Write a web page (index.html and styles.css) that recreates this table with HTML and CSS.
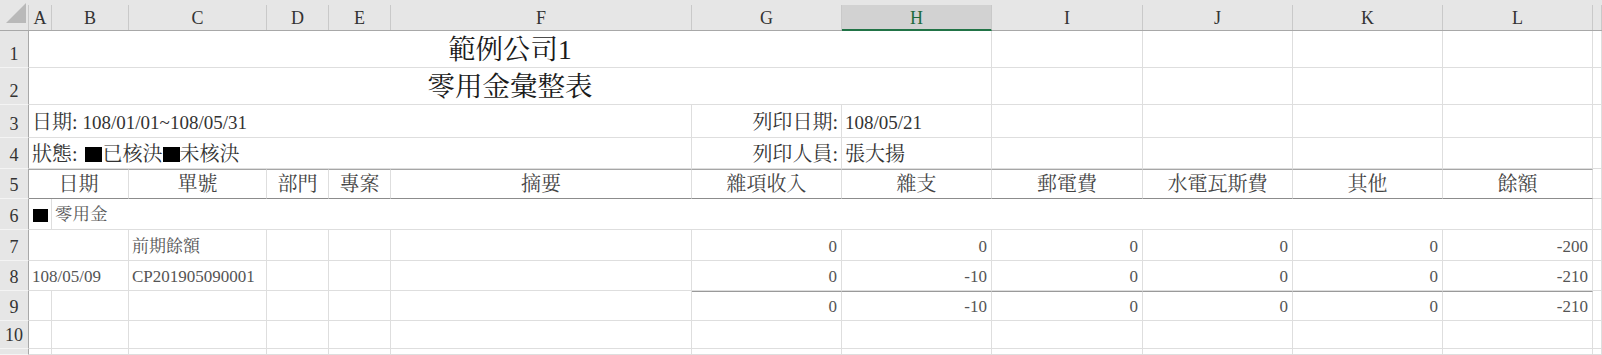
FILE: index.html
```html
<!DOCTYPE html>
<html lang="zh-Hant">
<head>
<meta charset="utf-8">
<title>零用金彙整表</title>
<link rel="stylesheet" href="styles.css">
</head>
<body>
<div class="sheet">
  <div class="r hdr">
    <div class="corner"><svg width="28" height="26" viewBox="0 0 28 26"><polygon points="26,3 26,23 6,23" fill="#b9b9b9"/></svg></div>
    <div class="ch">A</div><div class="ch">B</div><div class="ch">C</div><div class="ch">D</div><div class="ch">E</div><div class="ch">F</div><div class="ch">G</div><div class="ch sel">H</div><div class="ch">I</div><div class="ch">J</div><div class="ch">K</div><div class="ch">L</div><div class="ch"></div>
  </div>

  <div class="r r1">
    <div class="rh">1</div>
    <div class="c s8 center title">範例公司1</div>
    <div class="c"></div><div class="c"></div><div class="c"></div><div class="c"></div><div class="c"></div>
  </div>
  <div class="r r2">
    <div class="rh">2</div>
    <div class="c s8 center title">零用金彙整表</div>
    <div class="c"></div><div class="c"></div><div class="c"></div><div class="c"></div><div class="c"></div>
  </div>
  <div class="r r3">
    <div class="rh">3</div>
    <div class="c s6 info"><span>日期: <span class="lat">108/01/01~108/05/31</span></span></div>
    <div class="c info right">列印日期:</div>
    <div class="c info"><span class="lat">108/05/21</span></div>
    <div class="c"></div><div class="c"></div><div class="c"></div><div class="c"></div><div class="c"></div>
  </div>
  <div class="r r4">
    <div class="rh">4</div>
    <div class="c s6 info"><span>狀態:<span class="sq first"></span>已核決<span class="sq"></span>未核決</span></div>
    <div class="c info right">列印人員:</div>
    <div class="c info">張大揚</div>
    <div class="c"></div><div class="c"></div><div class="c"></div><div class="c"></div><div class="c"></div>
  </div>
  <div class="r r5">
    <div class="rh">5</div>
    <div class="c th s2 center">日期</div>
    <div class="c th center">單號</div>
    <div class="c th center">部門</div>
    <div class="c th center">專案</div>
    <div class="c th center">摘要</div>
    <div class="c th center">雜項收入</div>
    <div class="c th center">雜支</div>
    <div class="c th center">郵電費</div>
    <div class="c th center">水電瓦斯費</div>
    <div class="c th center">其他</div>
    <div class="c th center">餘額</div>
    <div class="c"></div>
  </div>
  <div class="r r6">
    <div class="rh">6</div>
    <div class="c grp"><span class="sq small"></span></div>
    <div class="c s11 grp">零用金</div>
    <div class="c"></div>
  </div>
  <div class="r r7">
    <div class="rh">7</div>
    <div class="c s2 d"></div>
    <div class="c d">前期餘額</div>
    <div class="c d"></div><div class="c d"></div><div class="c d"></div>
    <div class="c d num">0</div><div class="c d num">0</div><div class="c d num">0</div><div class="c d num">0</div><div class="c d num">0</div><div class="c d num">-200</div>
    <div class="c"></div>
  </div>
  <div class="r r8">
    <div class="rh">8</div>
    <div class="c s2 d">108/05/09</div>
    <div class="c d">CP201905090001</div>
    <div class="c d"></div><div class="c d"></div><div class="c d"></div>
    <div class="c d num">0</div><div class="c d num">-10</div><div class="c d num">0</div><div class="c d num">0</div><div class="c d num">0</div><div class="c d num">-210</div>
    <div class="c"></div>
  </div>
  <div class="r r9">
    <div class="rh">9</div>
    <div class="c"></div><div class="c"></div><div class="c"></div><div class="c"></div><div class="c"></div><div class="c"></div>
    <div class="c d num tot">0</div><div class="c d num tot">-10</div><div class="c d num tot">0</div><div class="c d num tot">0</div><div class="c d num tot">0</div><div class="c d num tot">-210</div>
    <div class="c"></div>
  </div>
  <div class="r r10">
    <div class="rh">10</div>
    <div class="c"></div><div class="c"></div><div class="c"></div><div class="c"></div><div class="c"></div><div class="c"></div><div class="c"></div><div class="c"></div><div class="c"></div><div class="c"></div><div class="c"></div><div class="c"></div><div class="c"></div>
  </div>
  <div class="r r11">
    <div class="rh"></div>
    <div class="c"></div><div class="c"></div><div class="c"></div><div class="c"></div><div class="c"></div><div class="c"></div><div class="c"></div><div class="c"></div><div class="c"></div><div class="c"></div><div class="c"></div><div class="c"></div><div class="c"></div>
  </div>
</div>
</body>
</html>
```

FILE: styles.css
```css
* { box-sizing: border-box; margin: 0; padding: 0; }
html, body { width: 1602px; height: 355px; overflow: hidden; background: #fff; }
body {
  font-family: "Liberation Serif", "Noto Serif CJK TC", "Noto Sans CJK TC", serif;
  color: #333;
}
.sheet { display: flex; flex-direction: column; }
.r {
  display: grid;
  grid-template-columns: 29px 23px 77px 138px 62px 62px 301px 150px 150px 151px 150px 150px 150px 9px;
}
.hdr {
  height: 31px;
  padding-top: 5px;
  background: #e6e6e6;
  border-bottom: 1px solid #a8a8a8;
}
.corner { border-right: 1px solid #c9c9c9; }
.corner svg { display: block; margin-top: -5px; }
.ch {
  border-right: 1px solid #c9c9c9;
  font-size: 18px;
  line-height: 1;
  display: flex;
  justify-content: center;
  align-items: flex-end;
  padding-bottom: 3px;
  color: #333;
}
.ch.sel {
  background: #d2d2d2;
  color: #1e6b3c;
  border-bottom: 2px solid #217346;
  padding-bottom: 2px;
  margin-bottom: -1px;
}
.r1, .r2 { height: 37px; }
.r3 { height: 33px; }
.r4 { height: 31px; }
.r5 { height: 30px; }
.r6, .r7 { height: 31px; }
.r8, .r9 { height: 30px; }
.r10 { height: 28px; }
.r11 { height: 6px; }

.rh {
  background: #e6e6e6;
  border-right: 1px solid #a8a8a8;
  border-bottom: 1px solid #f4f4f4;
  font-size: 18px;
  line-height: 1;
  display: flex;
  justify-content: center;
  align-items: flex-end;
  padding-bottom: 4px;
  color: #333;
}
.c {
  border-right: 1px solid #dedede;
  border-bottom: 1px solid #dedede;
  display: flex;
  align-items: flex-end;
  padding: 0 3px 4px;
  white-space: pre;
  line-height: 1;
  overflow: hidden;
}
.s2 { grid-column: span 2; }
.s6 { grid-column: span 6; }
.s8 { grid-column: span 8; }
.s11 { grid-column: span 11; }
.center { justify-content: center; }
.right { justify-content: flex-end; }
.num { justify-content: flex-end; padding-right: 4px; }

.title { font-size: 27.5px; color: #1a1a1a; padding-bottom: 4px; }
.info { font-size: 20px; color: #333; padding-bottom: 5px; }
.info .lat { font-size: 19px; }
.r4 .info { padding-bottom: 4px; }
.sq { display: inline-block; width: 17px; height: 15px; background: #000; vertical-align: -1px; }
.sq.first { margin-left: 7px; margin-right: 1px; }
.sq.small { width: 15px; height: 13px; margin-bottom: 1px; margin-left: 1px; }
.th {
  font-size: 20px;
  color: #444;
  border-top: 1px solid #a6a6a6;
  border-bottom: 1px solid #8c8c8c;
  padding-bottom: 4px;
}
.grp { font-size: 17.5px; color: #5a5a5a; padding-bottom: 6px; }
.d { font-size: 17px; color: #555; padding-bottom: 5px; }
.tot { border-top: 1px solid #9a9a9a; }
```
